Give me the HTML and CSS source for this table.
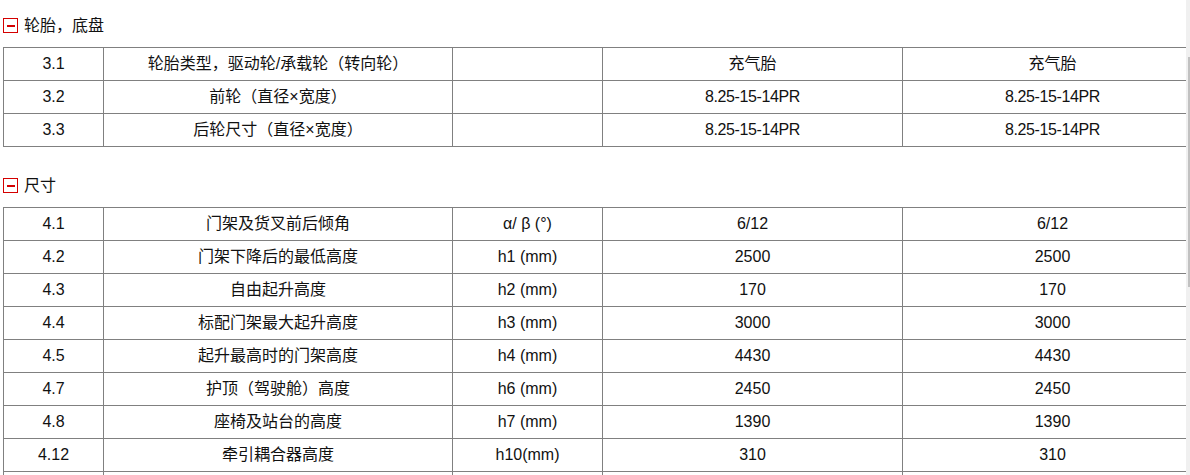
FILE: index.html
```html
<!DOCTYPE html>
<html lang="zh-CN">
<head>
<meta charset="utf-8">
<title>参数</title>
<link rel="stylesheet" href="styles.css">
</head>
<body>
<div class="page">
  <section class="sec">
    <div class="heading"><span class="toggle"></span><span class="title">轮胎，底盘</span></div>
    <table class="spec">
      <colgroup><col class="c1"><col class="c2"><col class="c3"><col class="c4"><col class="c5"></colgroup>
      <tr><td>3.1</td><td>轮胎类型，驱动轮/承载轮（转向轮）</td><td></td><td>充气胎</td><td>充气胎</td></tr>
      <tr><td>3.2</td><td>前轮（直径×宽度）</td><td></td><td class="n">8.25-15-14PR</td><td class="n">8.25-15-14PR</td></tr>
      <tr><td>3.3</td><td>后轮尺寸（直径×宽度）</td><td></td><td class="n">8.25-15-14PR</td><td class="n">8.25-15-14PR</td></tr>
    </table>
  </section>
  <section class="sec sec2">
    <div class="heading"><span class="toggle"></span><span class="title">尺寸</span></div>
    <table class="spec">
      <colgroup><col class="c1"><col class="c2"><col class="c3"><col class="c4"><col class="c5"></colgroup>
      <tr><td>4.1</td><td>门架及货叉前后倾角</td><td>α/ β (°)</td><td>6/12</td><td>6/12</td></tr>
      <tr><td>4.2</td><td>门架下降后的最低高度</td><td>h1 (mm)</td><td>2500</td><td>2500</td></tr>
      <tr><td>4.3</td><td>自由起升高度</td><td>h2 (mm)</td><td>170</td><td>170</td></tr>
      <tr><td>4.4</td><td>标配门架最大起升高度</td><td>h3 (mm)</td><td>3000</td><td>3000</td></tr>
      <tr><td>4.5</td><td>起升最高时的门架高度</td><td>h4 (mm)</td><td>4430</td><td>4430</td></tr>
      <tr><td>4.7</td><td>护顶（驾驶舱）高度</td><td>h6 (mm)</td><td>2450</td><td>2450</td></tr>
      <tr><td>4.8</td><td>座椅及站台的高度</td><td>h7 (mm)</td><td>1390</td><td>1390</td></tr>
      <tr><td>4.12</td><td>牵引耦合器高度</td><td>h10(mm)</td><td>310</td><td>310</td></tr>
      <tr><td></td><td></td><td></td><td></td><td></td></tr>
    </table>
  </section>
</div>
<div class="scrollbar"><div class="thumb"></div></div>
</body>
</html>
```
FILE: styles.css
```css
html, body {
  margin: 0;
  padding: 0;
  overflow: hidden;
  background: #fff;
}
body {
  font-family: "Liberation Sans", "Noto Sans CJK SC", sans-serif;
  font-size: 16px;
  color: #111;
  width: 1190px;
  height: 475px;
  position: relative;
}
.page {
  padding: 10px 0 0 3px;
}
.sec2 {
  margin-top: 23px;
}
.heading {
  height: 31px;
  display: flex;
  align-items: flex-start;
  gap: 6px;
  margin-bottom: 6px;
}
.toggle {
  width: 15px;
  height: 15px;
  box-sizing: border-box;
  border: 1px solid #d40000;
  margin-top: 8px;
  display: flex;
  align-items: center;
  justify-content: center;
  flex: none;
}
.toggle::before {
  content: "";
  width: 8px;
  height: 2px;
  background: #d40000;
}
.title {
  line-height: 31px;
}
.spec {
  table-layout: fixed;
  border-collapse: separate;
  border-spacing: 0;
  width: 1200px;
  border-top: 1px solid #808080;
  border-left: 1px solid #808080;
}
.c1 { width: 100px; }
.c2 { width: 349px; }
.c3 { width: 150px; }
.c4 { width: 300px; }
.c5 { width: 300px; }
.spec td {
  box-sizing: border-box;
  height: 33px;
  padding: 0;
  border-right: 1px solid #808080;
  border-bottom: 1px solid #808080;
  text-align: center;
  vertical-align: middle;
  white-space: nowrap;
  line-height: 20px;
}
.spec td.n {
  letter-spacing: -0.4px;
}
.scrollbar {
  position: absolute;
  top: 0;
  right: 0;
  width: 4px;
  height: 475px;
  background: #f0f0f0;
}
.thumb {
  position: absolute;
  top: 57px;
  right: 0;
  width: 2px;
  height: 230px;
  background: #c1c1c1;
}
```
